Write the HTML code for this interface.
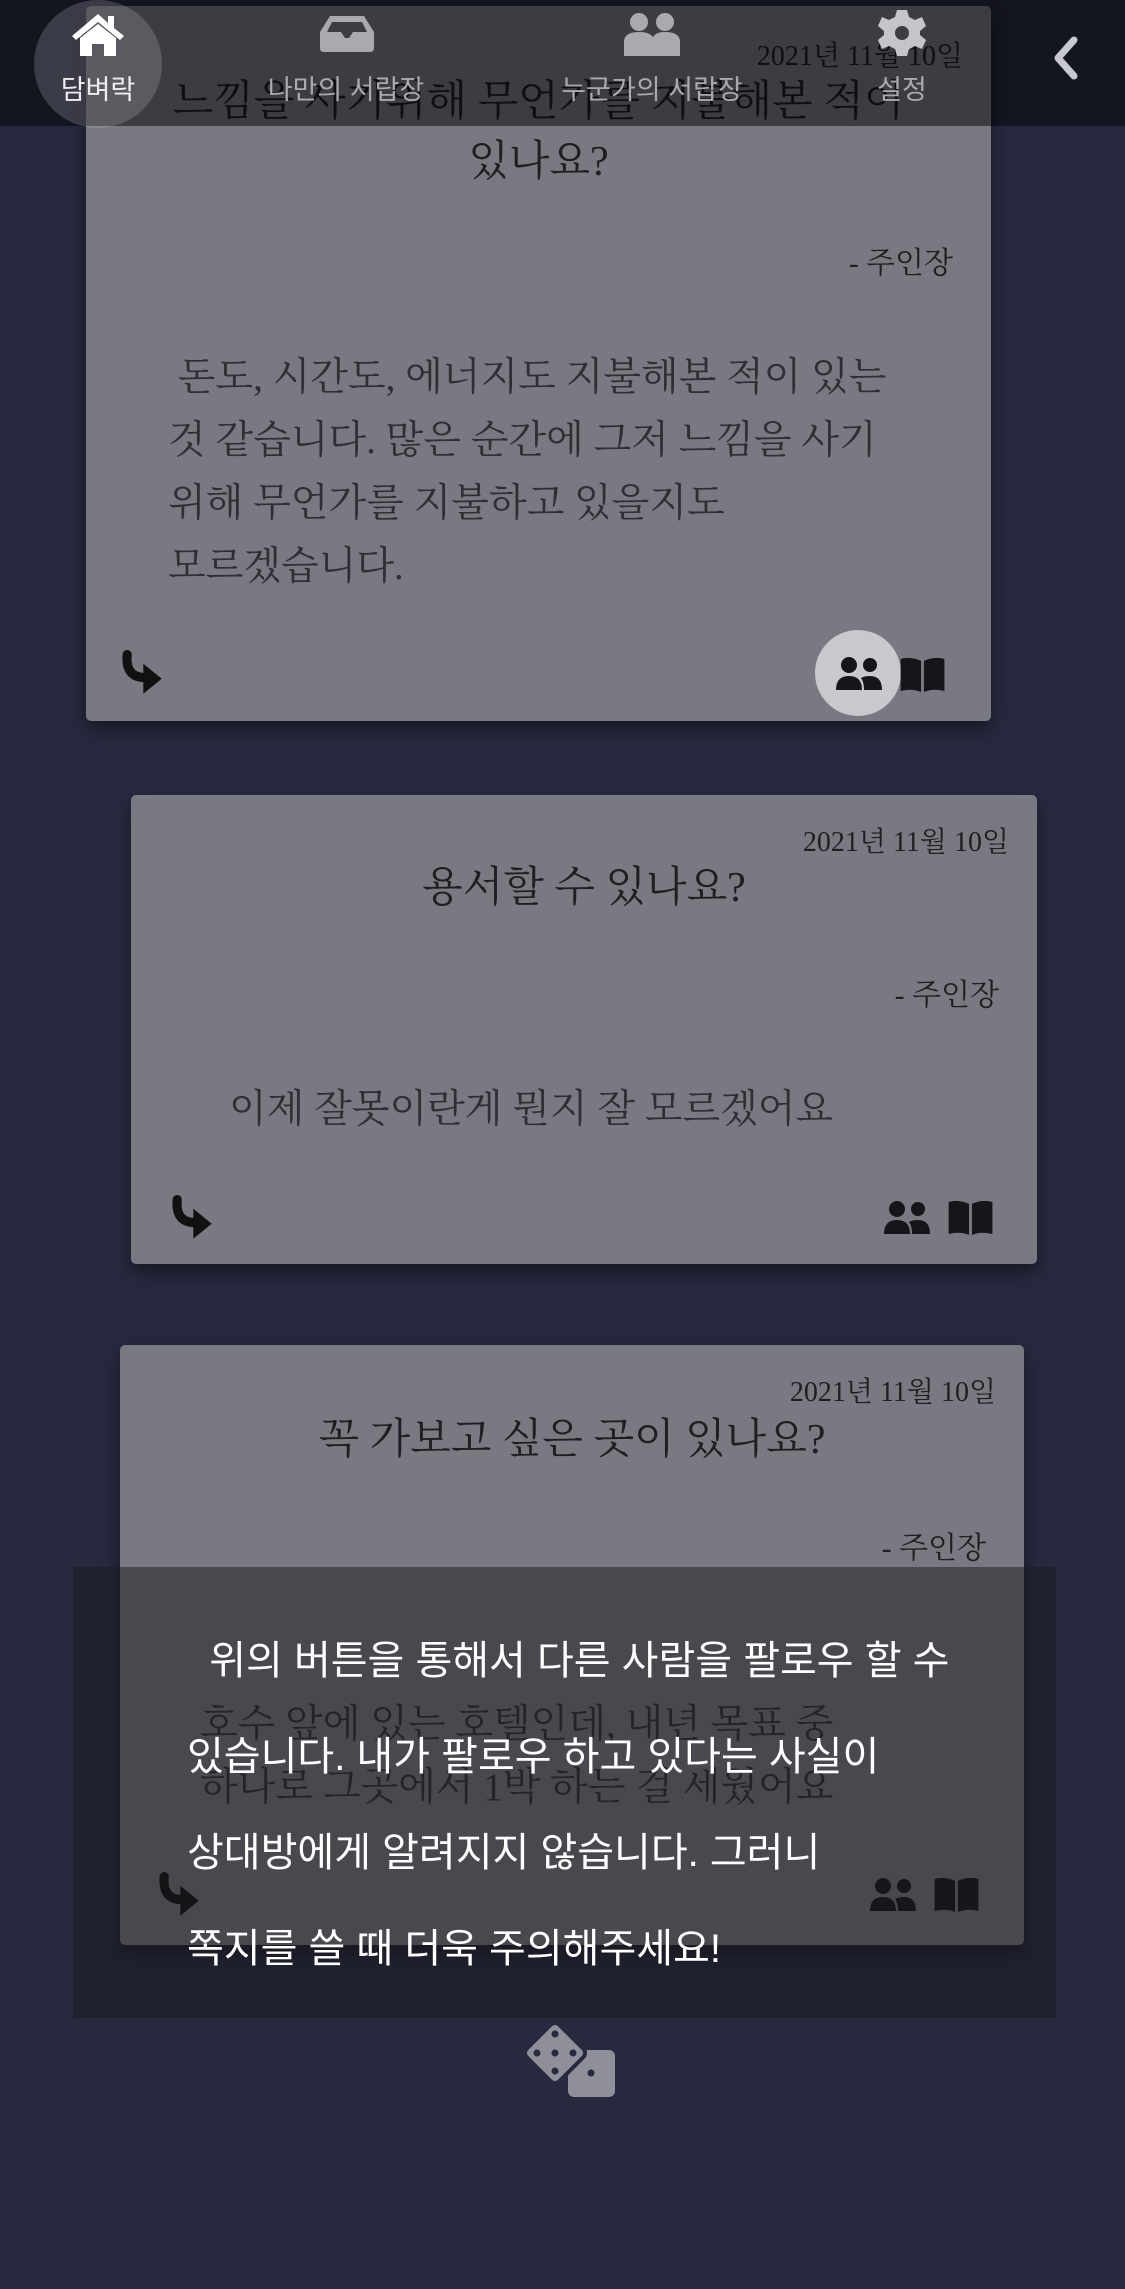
<!DOCTYPE html>
<html><head><meta charset="utf-8"><style>
*{margin:0;padding:0;box-sizing:border-box}
body{width:1125px;height:2289px;background:#272a3f;position:relative;overflow:hidden;font-family:"Liberation Sans","Noto Sans CJK KR",sans-serif}
.card{position:absolute;background:#797a81;border-radius:5px;box-shadow:0 8px 18px rgba(0,0,0,.45);color:#1e1f22}
.t{position:absolute;font-family:"Liberation Serif","Noto Serif CJK SC","Noto Sans CJK KR",serif}
.date{font-size:28px;right:28px}
.title{font-size:42px;left:0;right:0;text-align:center;line-height:60px}
.auth{font-size:30px;right:38px}
.body{font-size:39px;color:#2e2f34;line-height:63px}
svg{position:absolute}
.nav{position:absolute;top:0;left:0;width:1125px;height:126px;background:rgba(0,0,0,.5)}
.lbl{position:absolute;font-size:27px;color:#a9aab0;transform:translateX(-50%);top:68px;white-space:nowrap}
.ov{position:absolute;left:73px;top:1567px;width:983px;height:451px;background:rgba(23,23,30,.5)}
.ovt{position:absolute;color:#fff;font-size:40px;left:187px;white-space:nowrap}
</style></head><body>

<div class="card" style="left:86px;top:6px;width:905px;height:715px">
 <div class="t date" style="top:28px">2021년 11월 10일</div>
 <div class="t title" style="top:66px">느낌을 사기위해 무언가를 지불해본 적이<br>있나요?</div>
 <div class="t auth" style="top:232px">- 주인장</div>
 <div class="t body" style="left:82px;top:340px">&nbsp;돈도, 시간도, 에너지도 지불해본 적이 있는<br>것 같습니다. 많은 순간에 그저 느낌을 사기<br>위해 무언가를 지불하고 있을지도<br>모르겠습니다.</div>
</div>
<div class="card" style="left:131px;top:795px;width:906px;height:469px">
 <div class="t date" style="top:25px">2021년 11월 10일</div>
 <div class="t title" style="top:63px">용서할 수 있나요?</div>
 <div class="t auth" style="top:175px">- 주인장</div>
 <div class="t body" style="left:98px;top:283px">이제 잘못이란게 뭔지 잘 모르겠어요</div>
</div>
<div class="card" style="left:120px;top:1345px;width:904px;height:600px">
 <div class="t date" style="top:25px">2021년 11월 10일</div>
 <div class="t title" style="top:65px">꼭 가보고 싶은 곳이 있나요?</div>
 <div class="t auth" style="top:178px">- 주인장</div>
 <div class="t body" style="left:80px;top:348px">호수 앞에 있는 호텔인데, 내년 목표 중<br>하나로 그곳에서 1박 하는 걸 세웠어요</div>
</div>

<svg width="0" height="0"><defs>
<g id="arr"><path d="M8 4 Q6 24 24 24" stroke="#111" stroke-width="8" fill="none" stroke-linecap="round"/><path d="M22 12 L38 25 L22 38z" fill="#111"/></g>
<g id="ppl"><circle cx="13" cy="9" r="8"/><circle cx="34" cy="9" r="7"/><path d="M0 34 q0 -14 13 -14 q13 0 13 14 z"/><path d="M28 34 q0 -8 -3 -12 q3 -2 9 -2 q12 0 12 14 z"/></g>
<g id="book"><path d="M0 2 q10 -3 21 2 v32 q-10 -4 -21 -1z M24 4 q10 -5 21 -2 v33 q-11 -3 -21 1z"/></g>
</defs></svg>

<svg style="left:118px;top:650px" width="46" height="46" viewBox="0 0 40 40"><use href="#arr"/></svg>
<div style="position:absolute;left:815px;top:630px;width:86px;height:86px;border-radius:50%;background:#c8c8cf"></div>
<svg style="left:836px;top:656px" width="48" height="36" viewBox="0 0 48 36" fill="#15161c"><use href="#ppl"/></svg>
<svg style="left:900px;top:657px" width="46" height="36" viewBox="0 0 46 37" fill="#15161c"><use href="#book"/></svg>

<svg style="left:168px;top:1195px" width="46" height="46" viewBox="0 0 40 40"><use href="#arr"/></svg>
<svg style="left:884px;top:1200px" width="48" height="36" viewBox="0 0 48 36" fill="#15161c"><use href="#ppl"/></svg>
<svg style="left:948px;top:1200px" width="46" height="36" viewBox="0 0 46 37" fill="#15161c"><use href="#book"/></svg>

<svg style="left:155px;top:1872px" width="46" height="46" viewBox="0 0 40 40"><use href="#arr"/></svg>
<svg style="left:870px;top:1877px" width="48" height="36" viewBox="0 0 48 36" fill="#15161c"><use href="#ppl"/></svg>
<svg style="left:934px;top:1877px" width="46" height="36" viewBox="0 0 46 37" fill="#15161c"><use href="#book"/></svg>

<div class="ov"></div>
<div class="ovt" style="top:1628px">&nbsp;&nbsp;위의 버튼을 통해서 다른 사람을 팔로우 할 수</div>
<div class="ovt" style="top:1724px">있습니다. 내가 팔로우 하고 있다는 사실이</div>
<div class="ovt" style="top:1820px">상대방에게 알려지지 않습니다. 그러니</div>
<div class="ovt" style="top:1916px">쪽지를 쓸 때 더욱 주의해주세요!</div>

<svg style="left:518px;top:2018px" width="100" height="82" viewBox="0 0 100 82" fill="#8e8f98">
 <rect x="50" y="32" width="47" height="47" rx="6"/>
 <rect x="14" y="12" width="46" height="46" rx="6" transform="rotate(45 37 35)" stroke="#272a3f" stroke-width="4"/>
 <g fill="#272a3f"><circle cx="37" cy="16" r="3.5"/><circle cx="19" cy="35" r="3.5"/><circle cx="37" cy="35" r="3.5"/><circle cx="55" cy="35" r="3.5"/><circle cx="37" cy="53" r="3.5"/><circle cx="73" cy="55" r="3.5"/></g>
</svg>

<div class="nav"></div>
<div style="position:absolute;left:34px;top:0px;width:128px;height:128px;border-radius:50%;background:rgba(200,200,215,.22)"></div>
<svg style="left:70px;top:12px" width="56" height="44" viewBox="0 0 56 44" fill="#fff"><path d="M28 2 L2 24 l4 4 L28 10 L50 28 l4 -4 L44 16 V4 h-6 v7z"/><path d="M10 26 L28 12 L46 26 V44 H34 V32 H22 V44 H10z"/></svg>
<div class="lbl" style="left:98px;color:#eee">담벼락</div>
<svg style="left:320px;top:16px" width="54" height="36" viewBox="0 0 54 36" fill="#a9aab0"><path d="M10 0 h34 l10 16 v16 q0 4 -4 4 h-46 q-4 0 -4 -4 v-16z M12 6 l-5 10 h14 l4 6 h4 l4 -6 h14 l-5 -10z"/></svg>
<div class="lbl" style="left:346px">나만의 서랍장</div>
<svg style="left:622px;top:12px" width="60" height="44" viewBox="0 0 60 44" fill="#a9aab0"><circle cx="17" cy="10" r="9"/><circle cx="43" cy="10" r="9"/><path d="M2 44 v-14 q0 -10 15 -10 q15 0 15 10 v14z M30 44 v-14 q0 -10 13 -10 q15 0 15 10 v14z"/></svg>
<div class="lbl" style="left:652px">누군가의 서랍장</div>
<svg style="left:878px;top:8px" width="48" height="50" viewBox="0 0 48 50" fill="#c4c5cb"><path d="M19 2 h10 l2 7 l6 3 l7 -3 l4 9 -6 5 v4 l6 5 -4 9 -7 -3 -6 3 -2 7 h-10 l-2 -7 -6 -3 -7 3 -4 -9 6 -5 v-4 l-6 -5 4 -9 7 3 6 -3z"/><circle cx="24" cy="25" r="7" fill="#3d3e44"/></svg>
<div class="lbl" style="left:902px">설정</div>
<svg style="left:1050px;top:36px" width="30" height="44" viewBox="0 0 30 44"><path d="M24 4 L8 22 L24 40" stroke="#c8c9d0" stroke-width="7" fill="none" stroke-linecap="round" stroke-linejoin="round"/></svg>

</body></html>
